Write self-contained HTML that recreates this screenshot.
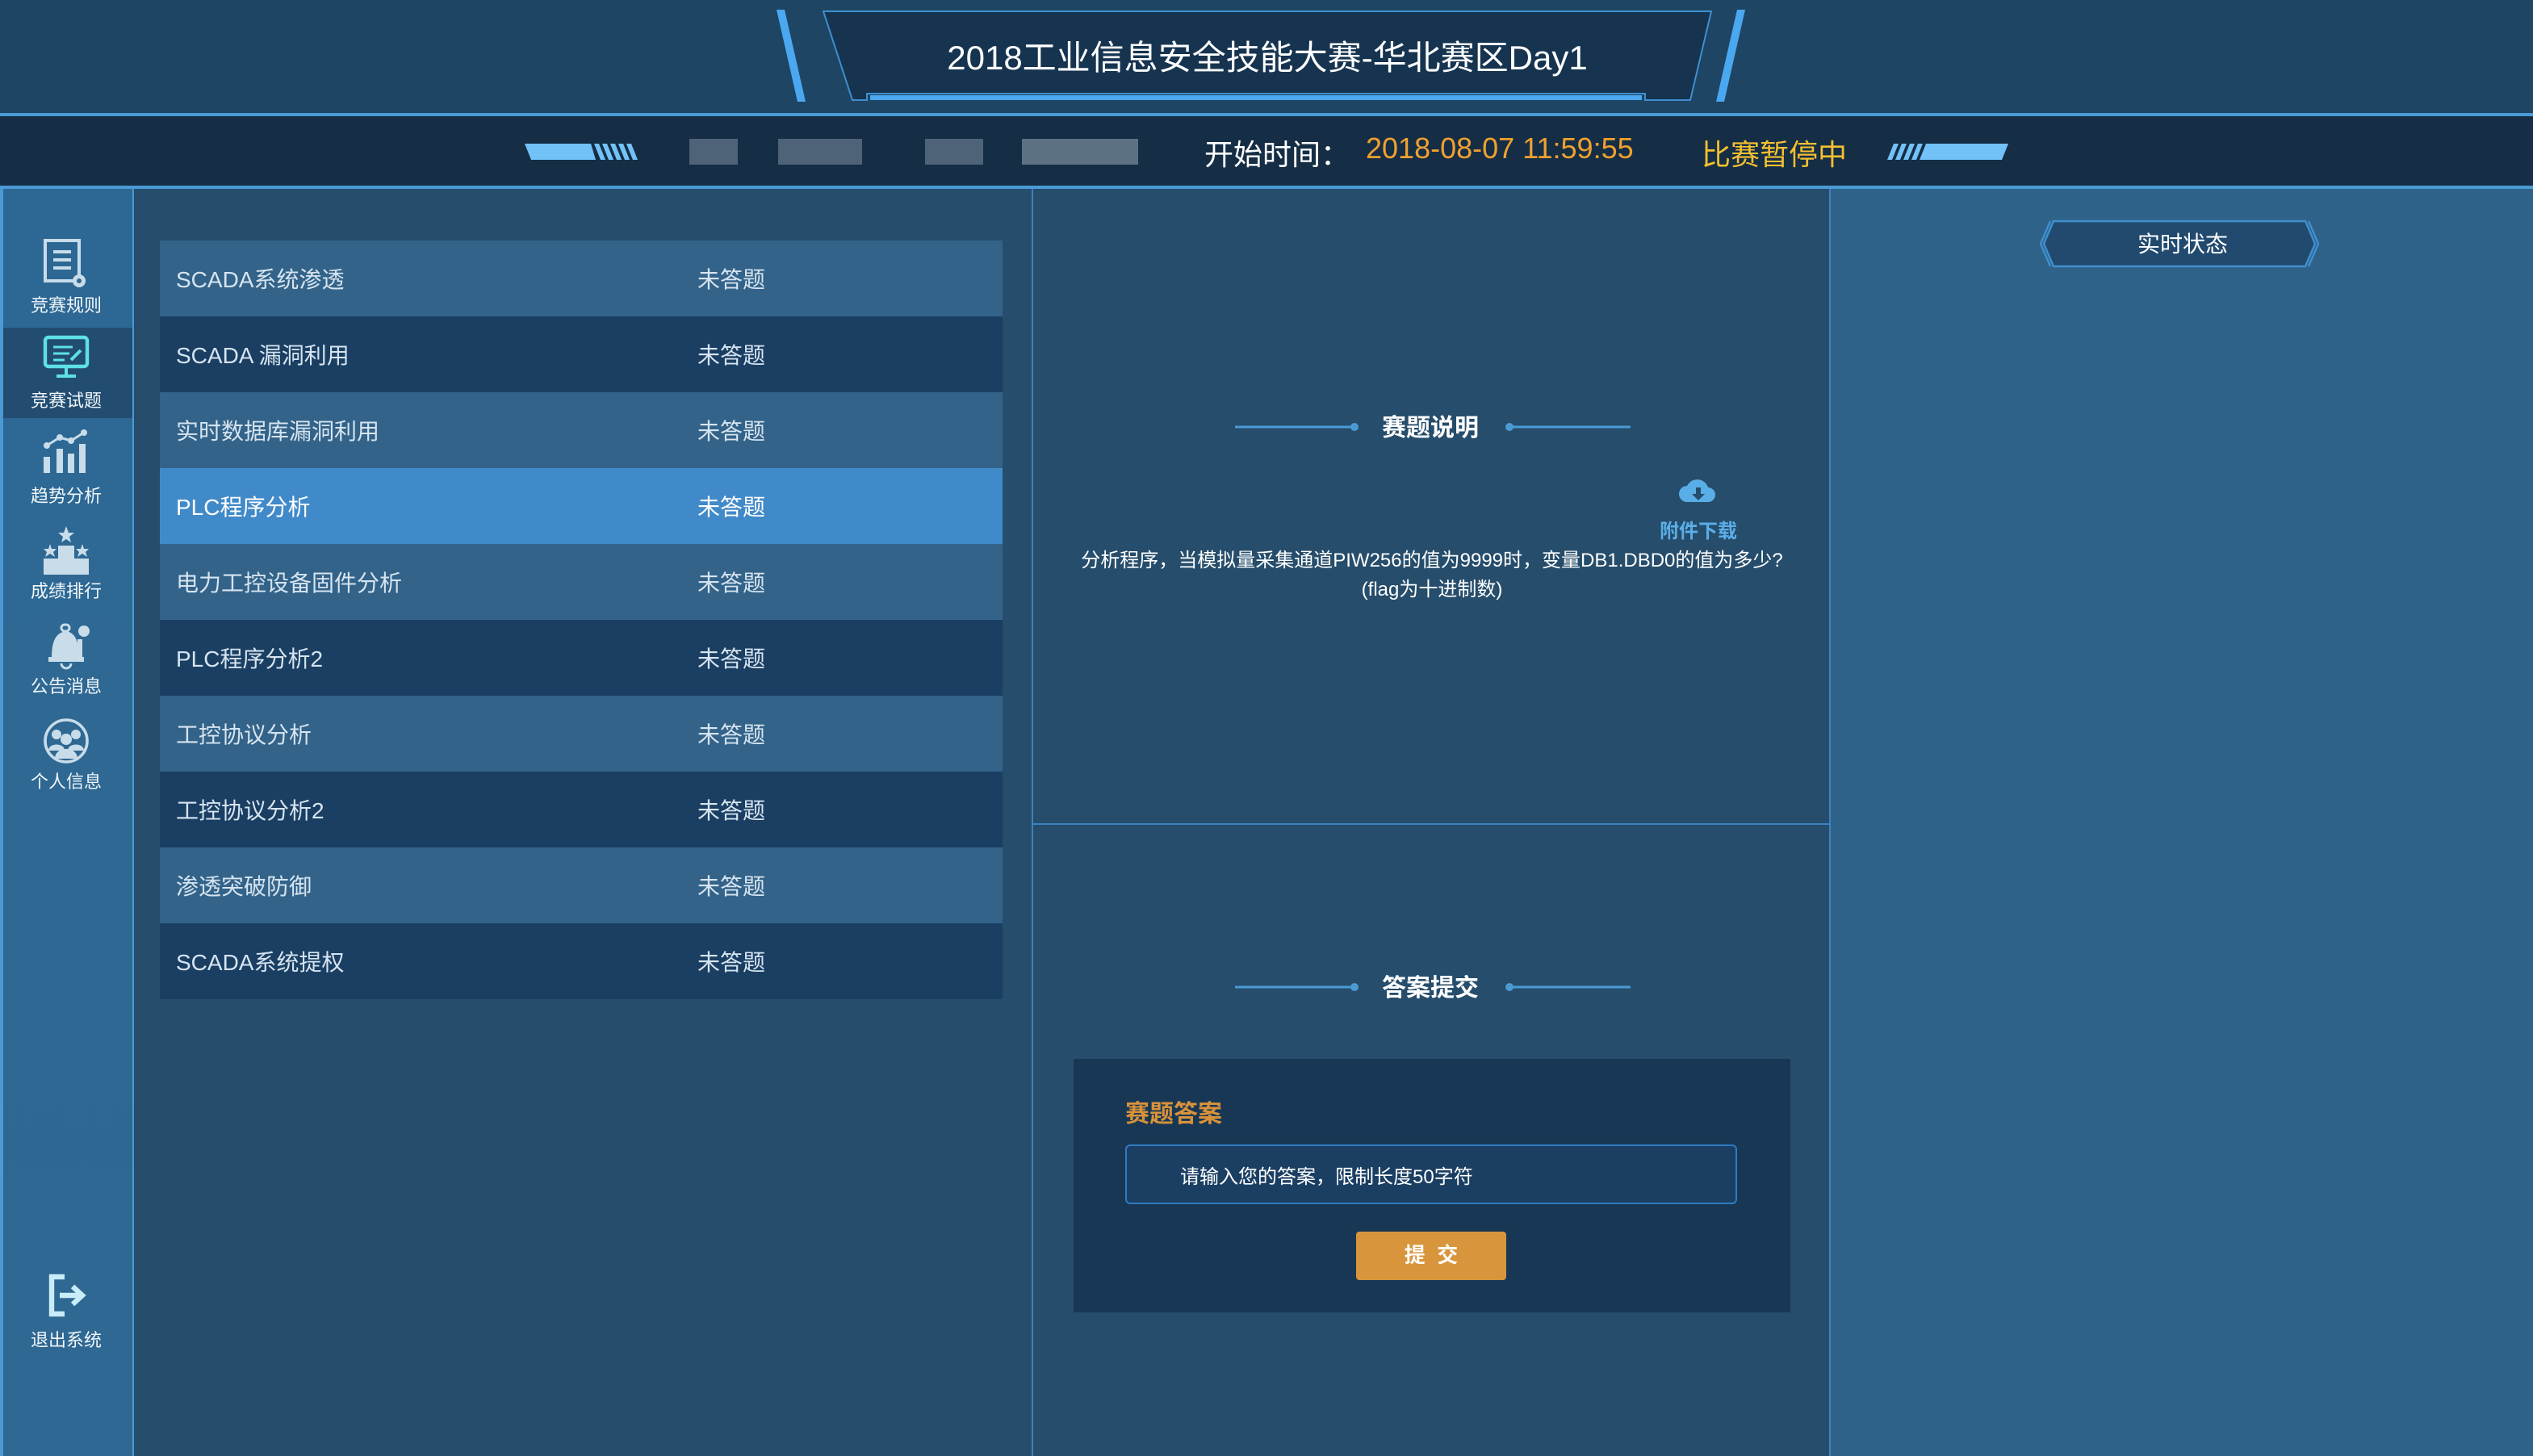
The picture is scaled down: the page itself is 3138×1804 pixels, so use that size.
<!DOCTYPE html>
<html><head><meta charset="utf-8">
<style>
*{margin:0;padding:0;box-sizing:border-box}
html,body{width:3138px;height:1804px;overflow:hidden;background:#264d6b}
#w{position:absolute;left:0;top:0;width:1569px;height:902px;transform:scale(2);transform-origin:0 0;font-family:"Liberation Sans","Noto Sans CJK SC",sans-serif;color:#e8f0f8}
.a{position:absolute}
.row{position:absolute;left:99px;width:522px;height:47px;font-size:14px;color:#d6e4f0}
.row span{position:absolute;top:14px}
.sb{position:absolute;left:0;width:82px;text-align:center;font-size:11px;color:#f0f6fb}
</style></head><body><div id="w">
<!-- top header -->
<div class="a" style="left:0;top:0;width:1569px;height:71px;background:#1e4563"></div>
<div class="a" style="left:0;top:70px;width:1569px;height:2px;background:#4a9ad6"></div>
<div class="a" style="left:0;top:72px;width:1569px;height:43px;background:#152e45"></div>
<div class="a" style="left:0;top:115px;width:1569px;height:2px;background:#4a9ad6"></div>
<svg class="a" style="left:470px;top:0" width="630" height="70">
 <polygon points="11,6 16,6 29,63 24,63" fill="#4aa8f0"/>
 <polygon points="606,6 611,6 598,63 593,63" fill="#4aa8f0"/>
 <polygon points="40,7 590,7 577,62 549,62 549,58 67,58 67,62 58,62" fill="#163450" stroke="#3f8fd0" stroke-width="1"/>
 <rect x="69" y="59" width="478" height="3" fill="#4aa8f0"/>
</svg>
<div class="a" style="left:510px;top:20px;width:550px;text-align:center;font-size:21px;color:#fff">2018工业信息安全技能大赛-华北赛区Day1</div>
<!-- info bar -->
<svg class="a" style="left:320px;top:86px" width="85" height="16"><polygon points="5,3 46,3 49,13 9,13" fill="#72c2f8"/><polygon points="48,3 51,3 55,13 52,13" fill="#72c2f8"/><polygon points="53,3 56,3 60,13 57,13" fill="#72c2f8"/><polygon points="58,3 61,3 65,13 62,13" fill="#72c2f8"/><polygon points="63,3 66,3 70,13 67,13" fill="#72c2f8"/><polygon points="68,3 71,3 75,13 72,13" fill="#72c2f8"/></svg>
<div class="a" style="left:427px;top:86px;width:30px;height:16px;background:#5c7083;opacity:.8"></div>
<div class="a" style="left:482px;top:86px;width:52px;height:16px;background:#5c7083;opacity:.8"></div>
<div class="a" style="left:573px;top:86px;width:36px;height:16px;background:#5c7083;opacity:.8"></div>
<div class="a" style="left:633px;top:86px;width:72px;height:16px;background:#6e8294;opacity:.8"></div>
<div class="a" style="left:746px;top:82px;font-size:18px;color:#fff">开始时间：</div>
<div class="a" style="left:846px;top:82px;font-size:18px;color:#f0a030">2018-08-07 11:59:55</div>
<div class="a" style="left:1054px;top:82px;font-size:18px;color:#f5c030">比赛暂停中</div>
<svg class="a" style="left:1165px;top:86px" width="85" height="16"><polygon points="8,3 11,3 7,13 4,13" fill="#72c2f8"/><polygon points="13,3 16,3 12,13 9,13" fill="#72c2f8"/><polygon points="18,3 21,3 17,13 14,13" fill="#72c2f8"/><polygon points="23,3 26,3 22,13 19,13" fill="#72c2f8"/><polygon points="28,3 79,3 75,13 24,13" fill="#72c2f8"/></svg>
<!-- sidebar -->
<div class="a" style="left:0;top:117px;width:82px;height:785px;background:linear-gradient(#2d6894,#2f6892)"></div>
<div class="a" style="left:0;top:117px;width:2px;height:785px;background:#4a9ad6"></div>
<div class="a" style="left:82px;top:117px;width:1px;height:785px;background:#4a9ad6"></div>
<div class="a" style="left:2px;top:203px;width:80px;height:56px;background:#224d70"></div>
<svg class="a" style="left:26px;top:147px" width="30" height="32"><rect x="2" y="2" width="21" height="25" fill="none" stroke="#c8dcea" stroke-width="2"/><line x1="7" y1="9" x2="18" y2="9" stroke="#c8dcea" stroke-width="2"/><line x1="7" y1="14" x2="18" y2="14" stroke="#c8dcea" stroke-width="2"/><line x1="7" y1="19" x2="18" y2="19" stroke="#c8dcea" stroke-width="2"/><circle cx="23" cy="27" r="4" fill="#c8dcea"/><circle cx="23" cy="27" r="1.5" fill="#2d6894"/></svg>
<div class="sb" style="top:181px">竞赛规则</div>
<svg class="a" style="left:26px;top:207px" width="32" height="30"><rect x="2" y="2" width="26" height="18" rx="2" fill="none" stroke="#5ee0e8" stroke-width="2.2"/><line x1="7" y1="8" x2="19" y2="8" stroke="#5ee0e8" stroke-width="1.5"/><line x1="7" y1="12" x2="17" y2="12" stroke="#5ee0e8" stroke-width="1.5"/><line x1="7" y1="16" x2="14" y2="16" stroke="#5ee0e8" stroke-width="1.5"/><line x1="18" y1="16" x2="24" y2="10" stroke="#5ee0e8" stroke-width="2"/><line x1="15" y1="20" x2="15" y2="25" stroke="#5ee0e8" stroke-width="2"/><line x1="9" y1="26" x2="21" y2="26" stroke="#5ee0e8" stroke-width="2"/></svg>
<div class="sb" style="top:240px">竞赛试题</div>
<svg class="a" style="left:26px;top:265px" width="30" height="30"><polyline points="3,11 11,6 18,8 26,3" fill="none" stroke="#c8dcea" stroke-width="1.5"/><circle cx="3" cy="11" r="2" fill="#c8dcea"/><circle cx="11" cy="6" r="2" fill="#c8dcea"/><circle cx="18" cy="8" r="2" fill="#c8dcea"/><circle cx="26" cy="3" r="2" fill="#c8dcea"/><rect x="1" y="18" width="4" height="10" fill="#c8dcea"/><rect x="9" y="13" width="4" height="15" fill="#c8dcea"/><rect x="16" y="16" width="4" height="12" fill="#c8dcea"/><rect x="23" y="10" width="4" height="18" fill="#c8dcea"/></svg>
<div class="sb" style="top:299px">趋势分析</div>
<svg class="a" style="left:26px;top:325px" width="30" height="32"><polygon points="15,1 16.5,5 20,5 17,7.5 18,11 15,9 12,11 13,7.5 10,5 13.5,5" fill="#c8dcea"/><polygon points="5,12 6,15 9,15 7,17 8,20 5,18 2,20 3,17 1,15 4,15" fill="#c8dcea"/><polygon points="25,12 26,15 29,15 27,17 28,20 25,18 22,20 23,17 21,15 24,15" fill="#c8dcea"/><rect x="10" y="13" width="10" height="10" fill="#c8dcea"/><rect x="1" y="21" width="28" height="10" fill="#c8dcea"/></svg>
<div class="sb" style="top:358px">成绩排行</div>
<svg class="a" style="left:26px;top:384px" width="30" height="32"><path d="M14 3 a3 3 0 0 1 2 0 M6 24 C6 14 8 8 15 7 C21 8 23 14 23 24 Z" fill="#c8dcea"/><rect x="12" y="3" width="5" height="4" rx="2" fill="none" stroke="#c8dcea" stroke-width="1.5"/><rect x="4" y="23" width="22" height="3" fill="#c8dcea"/><circle cx="26" cy="7" r="3.5" fill="#c8dcea"/><rect x="22" y="12" width="3" height="11" fill="#c8dcea"/><path d="M12 27 a3 3 0 0 0 6 0" fill="none" stroke="#c8dcea" stroke-width="1.5"/></svg>
<div class="sb" style="top:417px">公告消息</div>
<svg class="a" style="left:26px;top:443px" width="30" height="32"><circle cx="15" cy="16" r="13" fill="none" stroke="#c8dcea" stroke-width="1.8"/><circle cx="9" cy="12" r="3" fill="#c8dcea"/><circle cx="21" cy="12" r="3" fill="#c8dcea"/><circle cx="15" cy="15" r="3.5" fill="#c8dcea"/><path d="M4 22 C4 17 14 17 14 22 Z M16 22 C16 17 26 17 26 22 Z M8 27 C8 19 22 19 22 27 Z" fill="#c8dcea"/></svg>
<div class="sb" style="top:476px">个人信息</div>
<svg class="a" style="left:28px;top:788px" width="30" height="30"><path d="M12 3 H4 V26 H12" fill="none" stroke="#c8ecf8" stroke-width="3.2"/><line x1="9" y1="14.5" x2="22" y2="14.5" stroke="#c8ecf8" stroke-width="3.2"/><polyline points="17,9 23,14.5 17,20" fill="none" stroke="#c8ecf8" stroke-width="3.2"/></svg>
<div class="sb" style="top:822px">退出系统</div>
<!-- list panel -->
<div class="a" style="left:83px;top:117px;width:556px;height:785px;background:#264d6b"></div>
<div class="a" style="left:639px;top:117px;width:1px;height:785px;background:#3d82bf"></div>
<div class="row" style="top:149px;background:#336389"><span style="left:10px">SCADA系统渗透</span><span style="left:333px">未答题</span></div>
<div class="row" style="top:196px;background:#1b3f63"><span style="left:10px">SCADA 漏洞利用</span><span style="left:333px">未答题</span></div>
<div class="row" style="top:243px;background:#336389"><span style="left:10px">实时数据库漏洞利用</span><span style="left:333px">未答题</span></div>
<div class="row" style="top:290px;background:#418ac9;color:#fff"><span style="left:10px">PLC程序分析</span><span style="left:333px">未答题</span></div>
<div class="row" style="top:337px;background:#336389"><span style="left:10px">电力工控设备固件分析</span><span style="left:333px">未答题</span></div>
<div class="row" style="top:384px;background:#1b3f63"><span style="left:10px">PLC程序分析2</span><span style="left:333px">未答题</span></div>
<div class="row" style="top:431px;background:#336389"><span style="left:10px">工控协议分析</span><span style="left:333px">未答题</span></div>
<div class="row" style="top:478px;background:#1b3f63"><span style="left:10px">工控协议分析2</span><span style="left:333px">未答题</span></div>
<div class="row" style="top:525px;background:#336389"><span style="left:10px">渗透突破防御</span><span style="left:333px">未答题</span></div>
<div class="row" style="top:572px;background:#1b3f63"><span style="left:10px">SCADA系统提权</span><span style="left:333px">未答题</span></div>
<!-- middle panel -->
<div class="a" style="left:640px;top:510px;width:494px;height:1px;background:#3d82bf"></div>
<div class="a" style="left:1133px;top:117px;width:1px;height:785px;background:#3d82bf"></div>
<svg class="a" style="left:760px;top:255px" width="255" height="20"><line x1="5" y1="9.5" x2="78" y2="9.5" stroke="#4a9ad6" stroke-width="1.5"/><circle cx="79" cy="9.5" r="2.5" fill="#4a9ad6"/><circle cx="175" cy="9.5" r="2.5" fill="#4a9ad6"/><line x1="176" y1="9.5" x2="250" y2="9.5" stroke="#4a9ad6" stroke-width="1.5"/></svg>
<div class="a" style="left:836px;top:254px;width:100px;text-align:center;font-size:15px;font-weight:bold;color:#fff">赛题说明</div>
<svg class="a" style="left:1040px;top:295px" width="24" height="20"><path d="M5 16 a5 5 0 0 1 0-10 a7 7 0 0 1 13 1 a4.5 4.5 0 0 1 0 9 Z" fill="#5aaee8"/><path d="M10.5 7 h3 v4 h2.5 l-4 4 l-4-4 h2.5 Z" fill="#264d6b"/></svg>
<div class="a" style="left:1022px;top:320px;width:60px;text-align:center;font-size:12px;font-weight:bold;color:#5aaee8">附件下载</div>
<div class="a" style="left:640px;top:338px;width:494px;text-align:center;font-size:12px;color:#fff;line-height:18px">分析程序，当模拟量采集通道PIW256的值为9999时，变量DB1.DBD0的值为多少?<br>(flag为十进制数)</div>
<svg class="a" style="left:760px;top:602px" width="255" height="20"><line x1="5" y1="9.5" x2="78" y2="9.5" stroke="#4a9ad6" stroke-width="1.5"/><circle cx="79" cy="9.5" r="2.5" fill="#4a9ad6"/><circle cx="175" cy="9.5" r="2.5" fill="#4a9ad6"/><line x1="176" y1="9.5" x2="250" y2="9.5" stroke="#4a9ad6" stroke-width="1.5"/></svg>
<div class="a" style="left:836px;top:601px;width:100px;text-align:center;font-size:15px;font-weight:bold;color:#fff">答案提交</div>
<div class="a" style="left:665px;top:656px;width:444px;height:157px;background:#183755"></div>
<div class="a" style="left:697px;top:679px;font-size:15px;font-weight:bold;color:#d8923a">赛题答案</div>
<div class="a" style="left:697px;top:709px;width:379px;height:37px;background:#1b3f63;border:1px solid #2f7ac0;border-radius:3px"></div>
<div class="a" style="left:731px;top:720px;font-size:12px;color:#fff">请输入您的答案，限制长度50字符</div>
<div class="a" style="left:840px;top:763px;width:93px;height:30px;background:#d8953c;border-radius:2px;text-align:center;line-height:30px;font-size:13px;font-weight:bold;color:#fff">提&nbsp;&nbsp;交</div>
<!-- right panel -->
<div class="a" style="left:1134px;top:117px;width:435px;height:785px;background:#2f6289"></div>
<svg class="a" style="left:1262px;top:134px" width="180" height="34"><polygon points="10,3 166,3 172,17 166,31 10,31 4,17" fill="#214a6e" stroke="#3f8fd0" stroke-width="1.2"/><polyline points="8,3 2,17 8,31" fill="none" stroke="#3f8fd0" stroke-width="1.2"/><polyline points="168,3 174,17 168,31" fill="none" stroke="#3f8fd0" stroke-width="1.2"/></svg>
<div class="a" style="left:1262px;top:141px;width:180px;text-align:center;font-size:14px;color:#fff">实时状态</div>
</div></body></html>
